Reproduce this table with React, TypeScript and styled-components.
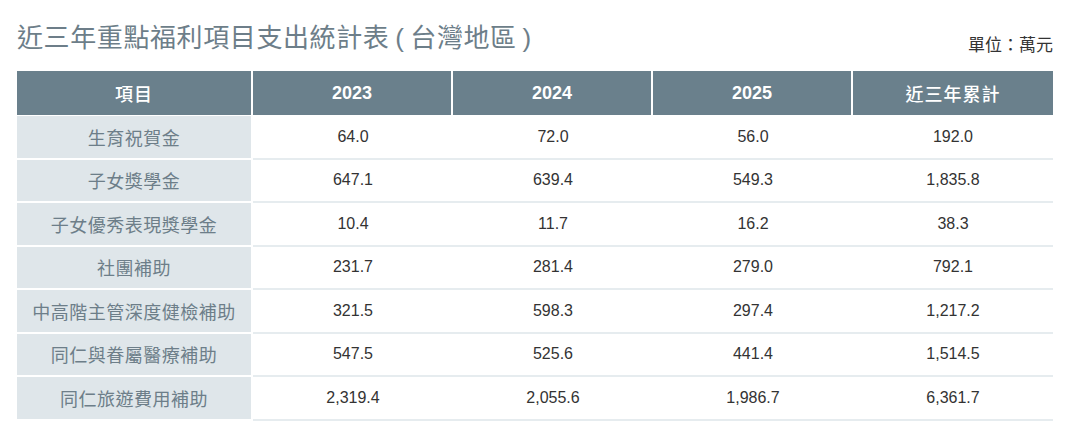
import React from "react";
import styled, { createGlobalStyle } from "styled-components";

const GlobalStyle = createGlobalStyle`
    html, body {
        margin: 0;
        padding: 0;
        background: #fff;
    }
    body {
        font-family: "Liberation Sans", Arial, "Noto Sans CJK TC", sans-serif;
    }
`;

interface Row {
    name: string;
    values: string[];
}

const years = ["2023", "2024", "2025"];

const rows: Row[] = [
    { name: "生育祝賀金", values: ["64.0", "72.0", "56.0", "192.0"] },
    { name: "子女獎學金", values: ["647.1", "639.4", "549.3", "1,835.8"] },
    { name: "子女優秀表現獎學金", values: ["10.4", "11.7", "16.2", "38.3"] },
    { name: "社團補助", values: ["231.7", "281.4", "279.0", "792.1"] },
    { name: "中高階主管深度健檢補助", values: ["321.5", "598.3", "297.4", "1,217.2"] },
    { name: "同仁與眷屬醫療補助", values: ["547.5", "525.6", "441.4", "1,514.5"] },
    { name: "同仁旅遊費用補助", values: ["2,319.4", "2,055.6", "1,986.7", "6,361.7"] },
];

export default function App() {
    return (
        <>
            <GlobalStyle />
            <Page>
                <Top>
                    <Title>近三年重點福利項目支出統計表 ( 台灣地區 )</Title>
                    <Unit>單位：萬元</Unit>
                </Top>
                <Table>
                    <colgroup>
                        <col style={{ width: 236 }} />
                        <col style={{ width: 200 }} />
                        <col style={{ width: 200 }} />
                        <col style={{ width: 200 }} />
                        <col style={{ width: 200 }} />
                    </colgroup>
                    <thead>
                        <tr>
                            <HeadCell>項目</HeadCell>
                            {years.map((y) => (
                                <HeadCell key={y} $numeric>{y}</HeadCell>
                            ))}
                            <HeadCell $last>近三年累計</HeadCell>
                        </tr>
                    </thead>
                    <tbody>
                        {rows.map((row) => (
                            <tr key={row.name}>
                                <NameCell>{row.name}</NameCell>
                                {row.values.map((v, i) => (
                                    <ValueCell key={i}>{v}</ValueCell>
                                ))}
                            </tr>
                        ))}
                    </tbody>
                </Table>
            </Page>
        </>
    );
}

const Page = styled.div`
    width: 1036px;
    padding: 0 21px 0 17px;
`;

const Top = styled.div`
    display: flex;
    justify-content: space-between;
    align-items: flex-end;
    height: 71px;
    box-sizing: border-box;
    padding-bottom: 15px;
`;

const Title = styled.h1`
    margin: 0;
    font-family: "Liberation Sans", "Noto Sans CJK TC", sans-serif;
    font-size: 26px;
    font-weight: 400;
    line-height: 36px;
    letter-spacing: 0.6px;
    word-spacing: -2px;
    color: #6d7e89;
    white-space: nowrap;
`;

const Unit = styled.div`
    font-family: "Noto Sans CJK TC", sans-serif;
    font-size: 17px;
    line-height: 24px;
    color: #333;
`;

const Table = styled.table`
    width: 1036px;
    table-layout: fixed;
    border-collapse: separate;
    border-spacing: 0;
`;

const HeadCell = styled.th<{ $numeric?: boolean; $last?: boolean }>`
    height: 44px;
    padding: 0;
    background: #6a808c;
    color: #fff;
    text-align: center;
    vertical-align: middle;
    font-family: ${(p) => (p.$numeric ? `"Liberation Sans", Arial, sans-serif` : `"Noto Sans CJK TC", sans-serif`)};
    font-size: 18px;
    font-weight: ${(p) => (p.$numeric ? 700 : 500)};
    letter-spacing: ${(p) => (p.$numeric ? 0 : 1)}px;
    border-right: ${(p) => (p.$last ? "none" : "2px solid #fff")};
    border-bottom: 1px solid #fff;
`;

const NameCell = styled.td`
    height: 41.5px;
    padding: 0;
    background: #dfe6ea;
    color: #6d7e89;
    text-align: center;
    vertical-align: middle;
    font-family: "Noto Sans CJK TC", sans-serif;
    font-size: 18px;
    letter-spacing: 0.5px;
    border-right: 2px solid #fff;
    border-bottom: 2px solid #fff;
`;

const ValueCell = styled.td`
    height: 41.5px;
    padding: 0;
    background: #fff;
    color: #333;
    text-align: center;
    vertical-align: middle;
    font-family: "Liberation Sans", Arial, sans-serif;
    font-size: 16px;
    border-bottom: 2px solid #e6ecef;
`;
